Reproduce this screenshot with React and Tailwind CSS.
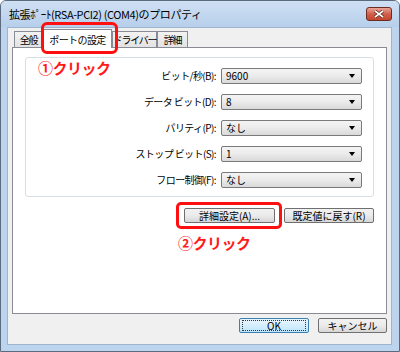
import React from 'react';

const rows = [
    { label: 'ビット/秒(B):', value: '9600' },
    { label: 'データ ビット(D):', value: '8' },
    { label: 'パリティ(P):', value: 'なし' },
    { label: 'ストップ ビット(S):', value: '1' },
    { label: 'フロー制御(F):', value: 'なし' },
];

const tabs = [
    { name: '全般', w: 'w-[29px]' },
    { name: 'ポートの設定', w: 'w-[69px]' },
    { name: 'ドライバー', w: 'w-[45px]' },
    { name: '詳細', w: 'w-[31px]' },
];

const Combo = ({ value }) => (
    <div className="w-[141px] h-[16px] flex items-center justify-between pl-[4px] pr-[6px] border border-[#7a7a7a] rounded-[2px] bg-gradient-to-b from-[#f4f4f4] via-[#ebebeb] to-[#d9d9d9] text-[10px] leading-none">
        <span>{value}</span>
        <span className="w-0 h-0 border-l-[3px] border-r-[3px] border-t-[4px] border-l-transparent border-r-transparent border-t-black" />
    </div>
);

const Button = ({ children, width, primary }) => (
    <div
        className={
            primary
                ? 'h-[15px] flex items-center justify-center border border-[#3c7fb1] rounded-[2px] bg-gradient-to-b from-[#eaf6fd] to-[#bee6fd] text-[10px] leading-none ' + width
                : 'h-[15px] flex items-center justify-center border border-[#707070] rounded-[2px] bg-gradient-to-b from-[#f2f2f2] via-[#ebebeb] to-[#d6d6d6] text-[10px] leading-none ' + width
        }
    >
        {children}
    </div>
);

const App = () => {
    return (
        <div className="w-[400px] h-[352px] flex flex-col bg-[#bcd4ee] border border-[#5a6b80] rounded-t-[6px] font-['Noto_Sans_CJK_JP',sans-serif] text-black overflow-hidden">
            {/* title bar */}
            <div className="h-[26px] flex items-center justify-between pl-[8px] pr-[7px] bg-gradient-to-b from-[#cfe0f3] to-[#b7cfeb]">
                <span className="text-[11px] tracking-[-0.4px]">拡張ﾎﾟｰﾄ(RSA-PCI2) (COM4)のプロパティ</span>
                <div className="w-[26px] h-[14px] flex items-center justify-center rounded-[3px] border border-[#6d2b22] bg-gradient-to-b from-[#e8a597] via-[#d0604a] to-[#c44530]">
                    <svg width="10" height="8" viewBox="0 0 10 8">
                        <path d="M1 1 L9 7 M9 1 L1 7" stroke="#4a1a12" strokeWidth="3" />
                        <path d="M1 1 L9 7 M9 1 L1 7" stroke="#fff" strokeWidth="1.6" />
                    </svg>
                </div>
            </div>

            {/* client area */}
            <div className="flex-1 ml-[6px] mr-[7px] mb-[6px] flex flex-col bg-[#f0f0f0] border border-[#9fb5cf]">
                {/* tabs */}
                <div className="flex items-end pl-[6px] pt-[1px] h-[19px] relative z-10">
                    {tabs.map((t, i) =>
                        i === 1 ? (
                            <div key={t.name} className={'relative h-[19px] -mb-px flex items-center justify-center whitespace-nowrap bg-white border border-b-0 border-[#898c95] text-[10px] tracking-[-0.6px] ' + t.w}>
                                {t.name}
                                <span className="absolute -left-[3px] -top-[8px] w-[77px] h-[32px] border-[3px] border-[#ff1010] rounded-[6px]" />
                            </div>
                        ) : (
                            <div key={t.name} className={'h-[16px] flex items-center justify-center whitespace-nowrap bg-gradient-to-b from-[#f2f2f2] to-[#e3e3e3] border border-b-0 border-[#898c95] text-[10px] tracking-[-1.2px] ' + t.w}>
                                {t.name}
                            </div>
                        )
                    )}
                </div>

                {/* panel */}
                <div className="mx-[4px] h-[267px] bg-white border border-[#898c95] flex flex-col">
                    <div className="relative mx-[12px] mt-[9px] h-[140px] border border-[#d5dfe5] rounded-[3px] flex flex-col pt-[10px] gap-[10px]">
                        <span className="absolute left-[12px] top-[2px] text-[15px] font-bold text-[#ff1a1a] leading-none tracking-[-0.5px]">①クリック</span>
                        {rows.map((r) => (
                            <div key={r.label} className="flex items-center justify-end gap-[5px] pr-[11px]">
                                <span className="text-[10px] leading-none tracking-[-0.6px] whitespace-pre">{r.label}</span>
                                <Combo value={r.value} />
                            </div>
                        ))}
                    </div>

                    <div className="flex justify-end gap-[9px] mr-[12px] mt-[11px]">
                        <div className="relative">
                            <Button width="w-[91px]">詳細設定(A)...</Button>
                            <span className="absolute -left-[8px] -top-[6px] w-[106px] h-[27px] border-[3px] border-[#ff1010] rounded-[5px]" />
                            <span className="absolute -left-[6px] top-[27px] whitespace-nowrap text-[15px] font-bold text-[#ff1a1a] leading-none tracking-[-0.5px]">②クリック</span>
                        </div>
                        <Button width="w-[90px]">既定値に戻す(R)</Button>
                    </div>
                </div>

                {/* bottom buttons */}
                <div className="flex justify-end gap-[9px] mr-[4px] mt-[4px]">
                    <Button width="w-[70px]" primary>
                        <span className="w-[64px] h-[11px] flex items-center justify-center border border-dotted border-[#333]">OK</span>
                    </Button>
                    <Button width="w-[69px]">キャンセル</Button>
                </div>
            </div>
        </div>
    );
};

export default App;
